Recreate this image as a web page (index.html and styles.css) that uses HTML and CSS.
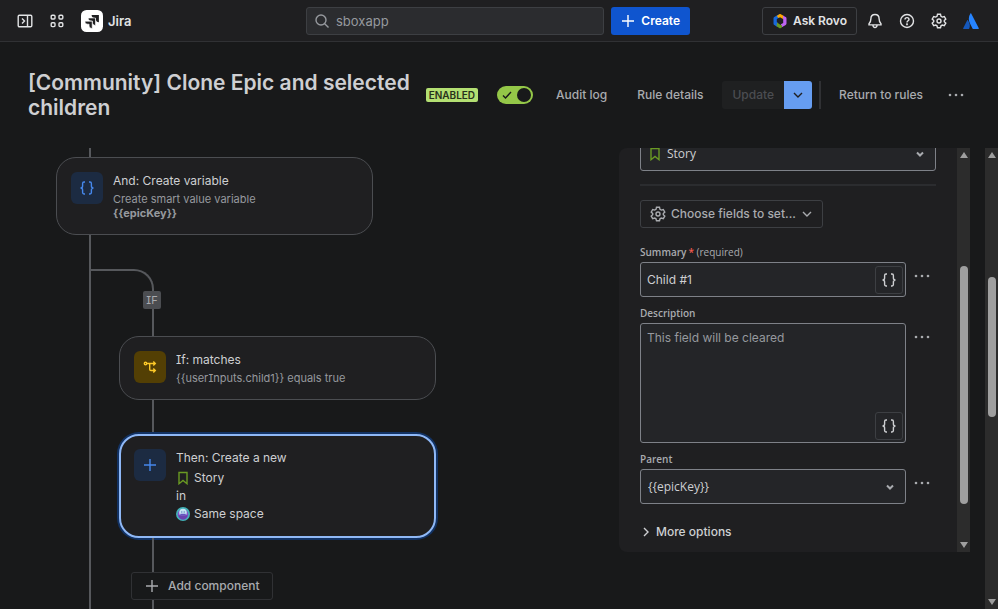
FILE: index.html
```html
<!DOCTYPE html>
<html lang="en">
<head>
    <meta charset="UTF-8">
    <meta name="viewport" content="width=device-width, initial-scale=1.0">
    <title>Clone Epic and selected children | Jira</title>
    <link rel="stylesheet" href="styles.css">
</head>
<body>
    <header class="topbar">
        <nav class="topbar-left">
            <button class="icon-btn" aria-label="Expand sidebar">
                <svg width="16" height="16" viewBox="0 0 16 16"><rect x="1.2" y="2.2" width="13.6" height="11.6" rx="1.2"/><path d="M10.5 2v12M5 5.5 7.5 8 5 10.5"/></svg>
            </button>
            <button class="icon-btn" aria-label="Switch app">
                <svg width="16" height="16" viewBox="0 0 16 16"><rect x="2.2" y="2.2" width="3.8" height="3.8" rx="1"/><rect x="10" y="2.2" width="3.8" height="3.8" rx="1"/><rect x="2.2" y="9.8" width="3.8" height="3.8" rx="1"/><rect x="10" y="9.8" width="3.8" height="3.8" rx="1"/></svg>
            </button>
            <a class="brand" href="#">
                <svg class="logo" width="22" height="22" viewBox="0 0 22 22">
                    <rect width="22" height="22" rx="5.5" fill="#fff"/>
                    <path fill="#1f1f21" d="M10.6 4.900h7.300v7.300c-1.800 0-3-1.300-3-3V7.900h-1.300c-1.700 0-3-1.200-3-3z"/>
                    <path fill="#1f1f21" stroke="#fff" stroke-width=".6" d="M7.200 8h7.300v7.400c-1.800 0-3.100-1.300-3.100-3.100V11h-1.200c-1.700 0-3-1.200-3-3z"/>
                    <path fill="#1f1f21" stroke="#fff" stroke-width=".6" d="M3.900 11.200h7.300v7.400c-1.800 0-3.100-1.300-3.100-3.100v-1.300H6.900c-1.700 0-3-1.200-3-3z"/>
                </svg>
                Jira
            </a>
        </nav>

        <div class="topbar-center">
            <div class="search">
                <svg width="16" height="16" viewBox="0 0 16 16"><circle cx="7" cy="7" r="5"/><path d="m10.700 10.700 3.800 3.800"/></svg>
                <input type="text" aria-label="Search" placeholder="sboxapp">
            </div>
            <button class="create-btn">
                <svg width="14" height="14" viewBox="0 0 14 14"><path d="M7 1v12M1 7h12"/></svg>
                Create
            </button>
        </div>

        <div class="topbar-right">
            <button class="rovo-btn">
                <svg class="logo" width="16" height="16" viewBox="0 0 16 16">
                    <path fill="#1868db" d="M6.500 1.500 2.300 3.900c-.5.3-.8.8-.8 1.400v5.400c0 .6.300 1.100.8 1.400l3.200 1.900V9.600L4.800 9V6l2.700-1.500z"/>
                    <path fill="#fca700" d="M4.800 3 7.200 1.200c.5-.3 1.100-.3 1.600 0l2.700 1.600v3.400L8 4.200 6.500 5z"/>
                    <path fill="#bf63f3" d="m10.800 2.500 2.900 1.600c.5.3.8.8.8 1.300v5.200c0 .6-.3 1.100-.8 1.400l-3.900 2.200-.9-2.900 2.300-1.300V6.500z"/>
                    <path fill="#6a9a23" d="m5 9.500 3 1.900 2 1.100v1.800l-1.200.6c-.5.300-1.100.3-1.600 0L4.600 13.200z"/>
                </svg>
                Ask Rovo
            </button>
            <button class="icon-btn" aria-label="Notifications">
                <svg width="16" height="16" viewBox="0 0 16 16"><path d="M8 1.500c-2.600 0-4.100 1.900-4.100 4.300 0 2.500-.6 3.700-1.900 5v1.100h12v-1.100c-1.300-1.300-1.900-2.500-1.900-5C12.100 3.400 10.600 1.500 8 1.500zM5.900 12c.1 1.500.9 2.500 2.100 2.500s2-1 2.100-2.500"/></svg>
            </button>
            <button class="icon-btn" aria-label="Help">
                <svg width="16" height="16" viewBox="0 0 16 16"><circle cx="8" cy="8" r="6.500"/><path d="M6 6.500c0-1.200.9-1.900 2-1.900s2 .7 2 1.800c0 1.300-2 1.400-2 3"/><circle cx="8" cy="11.300" r=".4"/></svg>
            </button>
            <button class="icon-btn" aria-label="Settings">
                <svg width="16" height="16" viewBox="0 0 16 16"><path d="M6.500 1.300h3l.5 2 1.300.8 2-.6 1.500 2.600-1.500 1.400v1.200l1.500 1.400-1.500 2.600-2-.6-1.300.7-.5 2h-3l-.5-2-1.300-.7-2 .6-1.500-2.600 1.500-1.400V7.500L1.200 6.100l1.500-2.600 2 .6L6 3.300z"/><circle cx="8" cy="8" r="2"/></svg>
            </button>
            <a class="icon-btn" href="#" aria-label="Atlassian profile">
                <svg class="logo" width="18" height="18" viewBox="0 0 18 18"><path fill="#1558bc" d="M5.900 8.300c-.3-.3-.6-.2-.8.100L1.200 16.200c-.2.400.1.700.5.700h5.100c.2 0 .4-.1.500-.3 1.100-2.300.5-6-1.400-8.300z"/><path fill="#2684ff" d="M8.400 1.500c-2.200 3.500-1.900 7-.5 9.800l2.600 5.300c.1.200.3.300.5.300h5.300c.4 0 .6-.4.500-.7L9.200 1.500c-.2-.4-.6-.4-.8 0z"/></svg>
            </a>
        </div>
    </header>

    <section class="rule-header">
        <h1>[Community] Clone Epic and selected children</h1>
        <span class="lozenge">ENABLED</span>
        <label class="toggle">
            <input type="checkbox" aria-label="Rule enabled" checked>
            <svg width="12" height="12" viewBox="0 0 12 12"><path d="m2 6.500 2.500 2.500L10 3"/></svg>
        </label>
        <div class="rule-actions">
            <button class="text-btn">Audit log</button>
            <button class="text-btn">Rule details</button>
            <div class="split-btn">
                <button class="update-btn" disabled>Update</button>
                <button class="update-menu" aria-label="More update options">
                    <svg width="12" height="12" viewBox="0 0 12 12"><path d="m2 4 4 4 4-4"/></svg>
                </button>
            </div>
            <span class="divider"></span>
            <button class="text-btn">Return to rules</button>
            <button class="dots-btn" aria-label="More actions">
                <svg width="16" height="16" viewBox="0 0 16 16"><circle cx="2" cy="8" r="1.300"/><circle cx="8" cy="8" r="1.300"/><circle cx="14" cy="8" r="1.300"/></svg>
            </button>
        </div>
    </section>

    <main class="workspace">
        <section class="canvas">
            <div class="line line-top"></div>
            <article class="card">
                <span class="card-icon blue">
                    <svg width="16" height="16" viewBox="0 0 16 16"><path d="M6 2H5c-.9 0-1.400.5-1.400 1.400v2.600c0 1.200-.7 2-2.100 2 1.400 0 2.100.8 2.100 2v2.600c0 .9.500 1.400 1.400 1.400h1M10 2h1c.9 0 1.400.5 1.400 1.400v2.600c0 1.200.7 2 2.100 2-1.400 0-2.100.8-2.100 2v2.600c0 .9-.5 1.400-1.400 1.400h-1"/></svg>
                </span>
                <div class="card-text">
                    <h2>And: Create variable</h2>
                    <p>Create smart value variable</p>
                    <p><strong>{{epicKey}}</strong></p>
                </div>
            </article>

            <div class="branch">
                <div class="elbow"></div>
                <div class="branch-body">
                    <span class="if-badge">IF</span>
                    <div class="line line-short"></div>
                    <article class="card">
                        <span class="card-icon yellow">
                            <svg width="16" height="16" viewBox="0 0 16 16"><circle cx="3.500" cy="4.500" r="1.200"/><path d="M5 4.500h8M11.300 2.500l2 2-2 2M7.700 4.500v5.800c0 .7.500 1.200 1.200 1.200H13M11.300 9.500l2 2-2 2"/></svg>
                        </span>
                        <div class="card-text">
                            <h2>If: matches</h2>
                            <p>{{userInputs.child1}} equals true</p>
                        </div>
                    </article>
                    <div class="line"></div>
                    <article class="card selected">
                        <span class="card-icon blue">
                            <svg width="16" height="16" viewBox="0 0 16 16"><path d="M8 2v12M2 8h12"/></svg>
                        </span>
                        <div class="card-text">
                            <h2>Then: Create a new</h2>
                            <div class="card-detail">
                                <svg class="story" width="14" height="14" viewBox="0 0 14 14"><path d="M3 1.500h8v11.200L7 9.500l-4 3.200z"/></svg>
                                Story
                            </div>
                            <div class="card-detail">in</div>
                            <div class="card-detail">
                                <svg class="logo" width="14" height="14" viewBox="0 0 14 14"><circle cx="7" cy="7" r="7" fill="#42b2b8"/><circle cx="7" cy="7.200" r="5.300" fill="#8250c8"/><circle cx="7" cy="5.500" r="3.800" fill="#c5e5f3"/><path fill="#6554c0" d="M4.500 6.800h5l.7 2H3.800z"/><circle cx="5.800" cy="5" r=".7" fill="#5b77c4"/><circle cx="8.200" cy="5" r=".7" fill="#5b77c4"/><path fill="#6941af" d="M2.300 8.500h9.400C11 11.200 9.200 12.500 7 12.500s-4-1.300-4.700-4z"/></svg>
                                Same space
                            </div>
                        </div>
                    </article>
                    <div class="line"></div>
                    <button class="add-btn">
                        <svg width="14" height="14" viewBox="0 0 14 14"><path d="M7 1v12M1 7h12"/></svg>
                        Add component
                    </button>
                    <div class="line line-rest"></div>
                </div>
            </div>
        </section>

        <aside class="panel">
            <form class="panel-form">
                <div class="select-wrap issue-type">
                    <svg class="story" width="14" height="14" viewBox="0 0 14 14"><path d="M3 1.500h8v11.200L7 9.500l-4 3.200z"/></svg>
                    <select aria-label="Work type"><option>Story</option></select>
                    <svg class="chevron" width="12" height="12" viewBox="0 0 12 12"><path d="m3 4.500 3 3 3-3"/></svg>
                </div>
                <hr>
                <button type="button" class="choose-btn">
                    <svg width="16" height="16" viewBox="0 0 16 16"><path d="M6.500 1.300h3l.5 2 1.300.8 2-.6 1.500 2.600-1.500 1.400v1.200l1.500 1.400-1.500 2.600-2-.6-1.300.7-.5 2h-3l-.5-2-1.300-.7-2 .6-1.500-2.600 1.500-1.400V7.500L1.200 6.100l1.500-2.600 2 .6L6 3.300z"/><circle cx="8" cy="8" r="2"/></svg>
                    Choose fields to set...
                    <svg width="12" height="12" viewBox="0 0 12 12"><path d="m2 4 4 4 4-4"/></svg>
                </button>

                <div class="field">
                    <label for="summary">Summary<span class="required">*</span> <span class="hint">(required)</span></label>
                    <div class="control">
                        <input id="summary" type="text" value="Child #1">
                        <button type="button" class="smart-btn" aria-label="Add smart value">
                            <svg width="16" height="16" viewBox="0 0 16 16"><path d="M6 2H5c-.9 0-1.400.5-1.400 1.400v2.600c0 1.200-.7 2-2.100 2 1.400 0 2.100.8 2.100 2v2.600c0 .9.500 1.400 1.400 1.400h1M10 2h1c.9 0 1.400.5 1.400 1.400v2.600c0 1.200.7 2 2.100 2-1.400 0-2.100.8-2.100 2v2.600c0 .9-.5 1.400-1.400 1.400h-1"/></svg>
                        </button>
                    </div>
                    <button type="button" class="dots-btn" aria-label="Summary options">
                        <svg width="16" height="16" viewBox="0 0 16 16"><circle cx="2" cy="8" r="1.300"/><circle cx="8" cy="8" r="1.300"/><circle cx="14" cy="8" r="1.300"/></svg>
                    </button>
                </div>

                <div class="field">
                    <label for="description">Description</label>
                    <div class="control">
                        <textarea id="description" placeholder="This field will be cleared"></textarea>
                        <button type="button" class="smart-btn" aria-label="Add smart value">
                            <svg width="16" height="16" viewBox="0 0 16 16"><path d="M6 2H5c-.9 0-1.400.5-1.400 1.400v2.600c0 1.200-.7 2-2.100 2 1.400 0 2.100.8 2.100 2v2.600c0 .9.500 1.400 1.400 1.400h1M10 2h1c.9 0 1.400.5 1.400 1.400v2.600c0 1.200.7 2 2.100 2-1.400 0-2.100.8-2.100 2v2.600c0 .9-.5 1.400-1.400 1.400h-1"/></svg>
                        </button>
                    </div>
                    <button type="button" class="dots-btn" aria-label="Description options">
                        <svg width="16" height="16" viewBox="0 0 16 16"><circle cx="2" cy="8" r="1.300"/><circle cx="8" cy="8" r="1.300"/><circle cx="14" cy="8" r="1.300"/></svg>
                    </button>
                </div>

                <div class="field">
                    <label for="parent">Parent</label>
                    <div class="select-wrap">
                        <select id="parent"><option>{{epicKey}}</option></select>
                        <svg class="chevron" width="12" height="12" viewBox="0 0 12 12"><path d="m3 4.500 3 3 3-3"/></svg>
                    </div>
                    <button type="button" class="dots-btn" aria-label="Parent options">
                        <svg width="16" height="16" viewBox="0 0 16 16"><circle cx="2" cy="8" r="1.300"/><circle cx="8" cy="8" r="1.300"/><circle cx="14" cy="8" r="1.300"/></svg>
                    </button>
                </div>

                <button type="button" class="more-btn">
                    <svg width="12" height="12" viewBox="0 0 12 12"><path d="m4 2 4 4-4 4"/></svg>
                    More options
                </button>
            </form>
            <div class="scrollbar panel-scroll">
                <span class="arrow up"></span>
                <span class="thumb"></span>
                <span class="arrow down"></span>
            </div>
        </aside>

        <div class="scrollbar page-scroll">
            <span class="arrow up"></span>
            <span class="thumb"></span>
            <span class="arrow down"></span>
        </div>
    </main>
</body>
</html>
```
FILE: styles.css
```css
:root {
    --bg: #18191a;
    --surface: #1f1f21;
    --input: #242528;
    --text: #cecfd2;
    --text-subtle: #a9abaf;
    --text-dim: #96999e;
    --border: #303134;
    --border-strong: #7e8188;
    --line: #56585c;
    --blue: #669df1;
    --green: #94c748;
    --font: Inter, sans-serif;
    --font-form: "Segoe UI", "Open Sans", sans-serif;
}

* {
    margin: 0;
    padding: 0;
    box-sizing: border-box;
}

body {
    display: flex;
    flex-direction: column;
    height: 100vh;
    overflow: hidden;
    background-color: var(--bg);
    color: var(--text);
    font-family: var(--font);
    font-size: 12px;
    line-height: 18px;
    /* capital I with serifs */
    font-feature-settings: "cv08";
}

button, input, select, textarea {
    font: inherit;
    color: inherit;
}

button {
    display: inline-flex;
    align-items: center;
    justify-content: center;
    flex: none;
    height: 28px;
    background: none;
    border: none;
    border-radius: 3px;
    font-weight: 500;
    white-space: nowrap;
    cursor: pointer;
}

a {
    color: inherit;
    text-decoration: none;
}

svg {
    flex: none;
    fill: none;
    stroke: currentColor;
    stroke-width: 1.4;
}

svg.logo {
    stroke: none;
}

svg.story {
    color: #6a9a23;
}

/* top bar */
.topbar {
    display: grid;
    grid-template-columns: 1fr minmax(0, 384px) 1fr;
    align-items: center;
    height: 42px;
    flex: none;
    padding: 0 13px 0 11px;
    background-color: var(--surface);
    border-bottom: 1px solid var(--border);
    color: #e2e3e5;
}

.topbar-left, .topbar-center, .topbar-right {
    display: flex;
    align-items: center;
    gap: 4px;
}

.topbar-right {
    justify-content: flex-end;
}

.topbar-center {
    gap: 7px;
}

.icon-btn {
    display: flex;
    align-items: center;
    justify-content: center;
    width: 28px;
    height: 28px;
}

.brand {
    display: flex;
    align-items: center;
    gap: 5px;
    padding-left: 6px;
    font-size: 13px;
    font-weight: 600;
}

.search {
    display: flex;
    flex: 1;
    align-items: center;
    gap: 6px;
    height: 28px;
    padding: 0 7px;
    background-color: #2b2c2f;
    border: 1px solid #3d3f43;
    border-radius: 3px;
    color: var(--text-dim);
}

.search input {
    flex: 1;
    min-width: 0;
    background: none;
    border: none;
    outline: none;
    font-size: 13px;
}

::placeholder {
    color: var(--text-dim);
    opacity: 1;
}

.create-btn {
    gap: 6px;
    padding: 0 10px;
    background-color: #0f55cf;
    color: #fff;
    font-weight: 600;
}

.rovo-btn {
    gap: 5px;
    padding: 0 9px;
    border: 1px solid #3d3f43;
    font-weight: 600;
}

/* rule header */
.rule-header {
    display: flex;
    align-items: center;
    height: 106px;
    flex: none;
    padding: 0 28px;
}

.rule-header h1 {
    flex: 1;
    font-size: 21px;
    font-weight: 600;
    line-height: 25px;
}

.lozenge {
    padding: 0 3px;
    background-color: #b3df72;
    border-radius: 2px;
    color: #28311b;
    font-size: 10px;
    font-weight: 600;
    line-height: 14px;
}

.toggle {
    display: flex;
    align-items: center;
    position: relative;
    margin: 0 8px 0 19px;
}

.toggle input {
    appearance: none;
    display: flex;
    align-items: center;
    justify-content: flex-end;
    width: 36px;
    height: 18px;
    padding: 0 2px;
    background-color: var(--green);
    border-radius: 9px;
}

.toggle input::before {
    content: "";
    width: 14px;
    height: 14px;
    background-color: var(--bg);
    border-radius: 50%;
}

.toggle svg {
    position: absolute;
    left: 4px;
    color: var(--bg);
}

.rule-actions {
    display: flex;
    align-items: center;
    color: var(--text-subtle);
}

.text-btn {
    padding: 0 15px;
}

.split-btn {
    display: flex;
    margin: 0 7px 0 4px;
}

.update-btn {
    padding: 0 10px;
    background-color: #1f2021;
    border-radius: 3px 0 0 3px;
    color: #4b4d51;
}

.update-menu {
    width: 28px;
    background-color: var(--blue);
    border-radius: 0 3px 3px 0;
    color: var(--surface);
}

.divider {
    width: 2px;
    height: 28px;
    margin-right: 3px;
    background-color: var(--border);
}

.dots-btn {
    width: 28px;
    color: var(--text-subtle);
}

.dots-btn svg {
    fill: currentColor;
    stroke: none;
}

.rule-actions .dots-btn {
    margin-left: 4px;
}

/* canvas */
.workspace {
    display: flex;
    flex: 1;
    min-height: 0;
}

.canvas {
    display: flex;
    flex: 1;
    flex-direction: column;
    min-width: 0;
    padding-left: 56px;
    overflow: hidden;
}

.line {
    flex: none;
    width: 2px;
    height: 34px;
    margin-left: 33px;
    background-color: var(--line);
}

.line-top {
    height: 9px;
}

.line-short {
    height: 27px;
}

.line-rest {
    flex: 1;
}

.card {
    display: flex;
    flex: none;
    gap: 10px;
    width: 317px;
    padding: 14px;
    background-color: var(--surface);
    border: 1px solid #4b4d51;
    border-radius: 20px;
}

.card.selected {
    padding: 13px;
    border: 2px solid #8fb8f6;
    box-shadow: 0 0 0 2px #123263;
}

.card-icon {
    display: flex;
    flex: none;
    align-items: center;
    justify-content: center;
    width: 32px;
    height: 32px;
    border-radius: 6px;
}

.card-icon.blue {
    background-color: #1c2b42;
    color: #4688ec;
}

.card-icon.yellow {
    background-color: #533f04;
    color: #fbc828;
}

.card-text h2 {
    margin-bottom: 2px;
    font-size: 12px;
    font-weight: 400;
    line-height: 18px;
}

.card-text p {
    color: var(--text-dim);
    font-size: 11px;
    line-height: 14px;
}

.card-detail {
    display: flex;
    align-items: center;
    gap: 4px;
}

.branch {
    display: flex;
    flex: 1;
    flex-direction: column;
    margin-left: 33px;
    padding-top: 34px;
    border-left: 2px solid var(--line);
}

.elbow {
    flex: none;
    width: 63px;
    height: 22px;
    border-top: 2px solid var(--line);
    border-right: 2px solid var(--line);
    border-top-right-radius: 20px;
}

.branch-body {
    display: flex;
    flex: 1;
    flex-direction: column;
    padding-left: 28px;
}

.if-badge {
    flex: none;
    width: 18px;
    margin-left: 24px;
    background-color: #4b4d51;
    border-radius: 2px;
    color: var(--text-subtle);
    font-size: 11px;
    line-height: 18px;
    text-align: center;
}

.add-btn {
    align-self: flex-start;
    gap: 9px;
    margin-left: 12px;
    padding: 0 12px 0 13px;
    border: 1px solid var(--border);
    color: var(--text-subtle);
}

/* form panel */
.panel {
    display: flex;
    width: 351px;
    flex: none;
    margin: 0 15px 57px 0;
    background-color: var(--surface);
    border-radius: 8px 0 0 8px;
    overflow: hidden;
}

.panel-form {
    display: flex;
    flex: 1;
    flex-direction: column;
    justify-content: flex-end;
    padding: 0 21px 10px;
}

.panel-form hr {
    flex: none;
    margin: 13px 0 14px;
    border: none;
    border-top: 2px solid #2b2c2f;
}

.choose-btn {
    align-self: flex-start;
    gap: 5px;
    margin-bottom: 8px;
    padding: 0 9px;
    border: 1px solid #3d3f43;
    color: var(--text-subtle);
}

.field {
    display: grid;
    flex: none;
    grid-template-columns: 1fr 28px;
    gap: 2px;
    margin-top: 8px;
}

.field label {
    grid-column: 1 / -1;
    color: var(--text-subtle);
    font-family: var(--font-form);
    font-size: 10px;
    font-weight: 600;
    line-height: 16px;
}

.required {
    padding-left: 2px;
    color: #f15b50;
}

.hint {
    font-weight: 500;
}

.control, .select-wrap {
    position: relative;
    display: flex;
    flex: none;
    align-items: center;
}

.control input, .control textarea, .select-wrap select {
    width: 100%;
    height: 35px;
    padding: 0 6px;
    background-color: var(--input);
    border: 1px solid var(--border-strong);
    border-radius: 3px;
    outline: none;
    appearance: none;
}

.control textarea {
    height: 120px;
    padding: 5px 6px;
    resize: none;
}

.select-wrap select {
    padding: 0 7px;
    font-family: var(--font-form);
}

.issue-type select {
    padding-left: 26px;
}

.issue-type .story {
    position: absolute;
    left: 8px;
}

.chevron {
    position: absolute;
    right: 10px;
    stroke-width: 2;
    color: var(--text-subtle);
}

.smart-btn {
    position: absolute;
    right: 3px;
    bottom: 3px;
    width: 28px;
    border: 1px solid #3d3f43;
}

.more-btn {
    align-self: flex-start;
    gap: 4px;
    height: 20px;
    margin-top: 18px;
}

/* scrollbars */
.scrollbar {
    display: flex;
    flex: none;
    flex-direction: column;
    align-items: center;
    width: 13px;
    padding: 4px 0;
    background-color: #2c2c2c;
}

.thumb {
    width: 8px;
    background-color: #9f9f9f;
    border-radius: 4px;
}

.arrow {
    border: 4px solid transparent;
}

.arrow.up {
    border-top: none;
    border-bottom: 6px solid #9f9f9f;
}

.arrow.down {
    margin-top: auto;
    border-bottom: none;
    border-top: 6px solid #9f9f9f;
}

.panel-scroll .thumb {
    height: 60%;
    margin-top: 108px;
}

.page-scroll .thumb {
    height: 31%;
    margin-top: 119px;
}
```
